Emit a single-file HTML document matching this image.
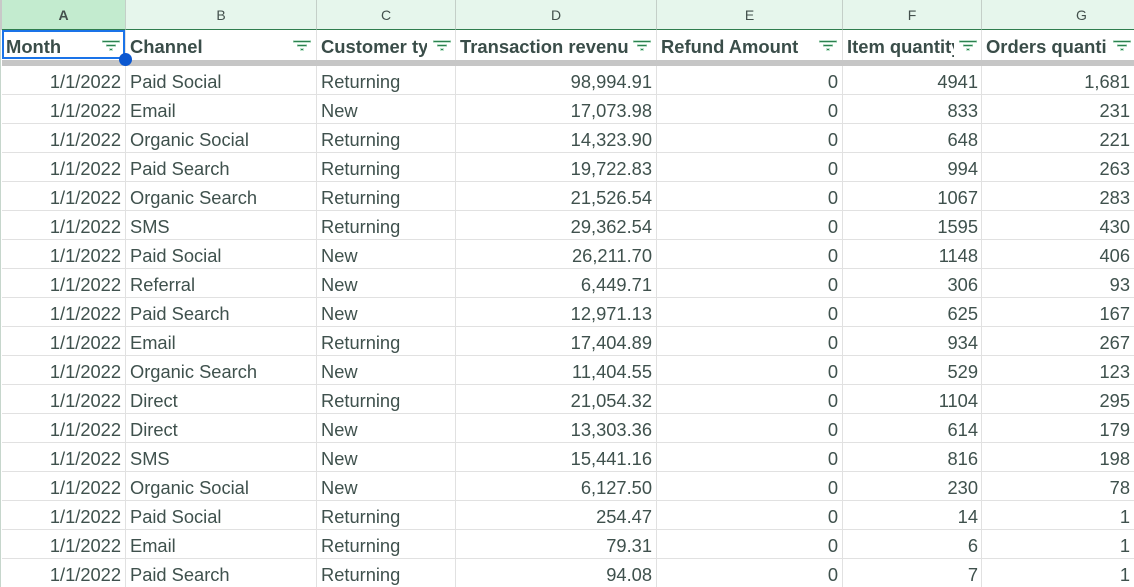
<!DOCTYPE html>
<html><head><meta charset="utf-8"><style>
html,body{margin:0;padding:0;width:1134px;height:587px;overflow:hidden;background:#fff}
body{font-family:"Liberation Sans",sans-serif;position:relative}
table{position:absolute;left:2px;top:0;border-collapse:separate;border-spacing:0;table-layout:fixed;width:1180px}
td,th{padding:0;overflow:hidden;white-space:nowrap;box-sizing:border-box}
tr.L th{height:30px;background:#e6f6ec;border-right:1px solid #c4cfc8;border-bottom:1px solid #2f7d4e;font-weight:400;font-size:14px;color:#43504c;text-align:center}
tr.L th.s{background:#c3ebcf;font-weight:700}
tr.H td{height:30px;border-right:1px solid #e1e1e1;font-weight:700;font-size:18.4px;line-height:20px;vertical-align:top;color:#3a4d49;padding:7px 0 0 4px;position:relative}
tr.H td span{display:block;overflow:hidden}
tr.H svg{position:absolute;top:10px;right:5px}
tr.B td{height:6px;background:#c6c6c6;border:0;font-size:0;padding:0}
tr.D td{height:29px;border-right:1px solid #e1e1e1;border-bottom:1px solid #e1e1e1;font-size:18.3px;line-height:20px;vertical-align:top;color:#3f514d;padding:6px 4px 0 4px;text-align:left}
tr.D td.r{text-align:right}
tr.D td:nth-child(6){padding-right:3px}
tr.D td.g{padding-right:51px}
.h{stroke:#bfe3cd;stroke-width:3;fill:none}
.c{stroke:#2c8050;stroke-width:1;fill:none}
#gut{position:absolute;left:0;top:0;width:1px;height:587px;background:#c6d6cc}
#gut2{position:absolute;left:0;top:0;width:2px;height:30px;background:#c8c8c8}
#sel{position:absolute;left:2px;top:30px;width:119px;height:25px;border:2px solid #1a73e8;pointer-events:none}
#dot{position:absolute;left:119px;top:53px;width:13px;height:13px;border-radius:50%;background:#0b57d0}
</style></head><body>
<table>
<colgroup><col style="width:124px"><col style="width:191px"><col style="width:139px"><col style="width:201px"><col style="width:186px"><col style="width:139px"><col style="width:200px"></colgroup>
<tr class="L"><th class="s">A</th><th>B</th><th>C</th><th>D</th><th>E</th><th>F</th><th>G</th></tr>
<tr class="H">
<td><span style="width:95px">Month</span><svg width="18" height="14" viewBox="0 0 18 14"><path class="h" d="M0 1.500H18M4 5.500H14M7 9.500H11"/><path class="c" d="M0.500 1.500H17.500M4.500 5.500H13.500M8 9.500H10"/></svg></td>
<td><span style="width:158px">Channel</span><svg width="18" height="14" viewBox="0 0 18 14"><path class="h" d="M0 1.500H18M4 5.500H14M7 9.500H11"/><path class="c" d="M0.500 1.500H17.500M4.500 5.500H13.500M8 9.500H10"/></svg></td>
<td><span style="width:106px">Customer type</span><svg style="right:4px" width="18" height="14" viewBox="0 0 18 14"><path class="h" d="M0 1.500H18M4 5.500H14M7 9.500H11"/><path class="c" d="M0.500 1.500H17.500M4.500 5.500H13.500M8 9.500H10"/></svg></td>
<td><span style="width:169px">Transaction revenue</span><svg width="18" height="14" viewBox="0 0 18 14"><path class="h" d="M0 1.500H18M4 5.500H14M7 9.500H11"/><path class="c" d="M0.500 1.500H17.500M4.500 5.500H13.500M8 9.500H10"/></svg></td>
<td><span style="width:158px">Refund Amount</span><svg width="18" height="14" viewBox="0 0 18 14"><path class="h" d="M0 1.500H18M4 5.500H14M7 9.500H11"/><path class="c" d="M0.500 1.500H17.500M4.500 5.500H13.500M8 9.500H10"/></svg></td>
<td><span style="width:107px">Item quantity</span><svg style="right:4px" width="18" height="14" viewBox="0 0 18 14"><path class="h" d="M0 1.500H18M4 5.500H14M7 9.500H11"/><path class="c" d="M0.500 1.500H17.500M4.500 5.500H13.500M8 9.500H10"/></svg></td>
<td><span style="width:120px">Orders quantity</span><svg style="right:50px" width="18" height="14" viewBox="0 0 18 14"><path class="h" d="M0 1.500H18M4 5.500H14M7 9.500H11"/><path class="c" d="M0.500 1.500H17.500M4.500 5.500H13.500M8 9.500H10"/></svg></td>
</tr>
<tr class="B"><td></td><td></td><td></td><td></td><td></td><td></td><td></td></tr>
<tr class="D"><td class="r">1/1/2022</td><td>Paid Social</td><td>Returning</td><td class="r">98,994.91</td><td class="r">0</td><td class="r">4941</td><td class="r g">1,681</td></tr>
<tr class="D"><td class="r">1/1/2022</td><td>Email</td><td>New</td><td class="r">17,073.98</td><td class="r">0</td><td class="r">833</td><td class="r g">231</td></tr>
<tr class="D"><td class="r">1/1/2022</td><td>Organic Social</td><td>Returning</td><td class="r">14,323.90</td><td class="r">0</td><td class="r">648</td><td class="r g">221</td></tr>
<tr class="D"><td class="r">1/1/2022</td><td>Paid Search</td><td>Returning</td><td class="r">19,722.83</td><td class="r">0</td><td class="r">994</td><td class="r g">263</td></tr>
<tr class="D"><td class="r">1/1/2022</td><td>Organic Search</td><td>Returning</td><td class="r">21,526.54</td><td class="r">0</td><td class="r">1067</td><td class="r g">283</td></tr>
<tr class="D"><td class="r">1/1/2022</td><td>SMS</td><td>Returning</td><td class="r">29,362.54</td><td class="r">0</td><td class="r">1595</td><td class="r g">430</td></tr>
<tr class="D"><td class="r">1/1/2022</td><td>Paid Social</td><td>New</td><td class="r">26,211.70</td><td class="r">0</td><td class="r">1148</td><td class="r g">406</td></tr>
<tr class="D"><td class="r">1/1/2022</td><td>Referral</td><td>New</td><td class="r">6,449.71</td><td class="r">0</td><td class="r">306</td><td class="r g">93</td></tr>
<tr class="D"><td class="r">1/1/2022</td><td>Paid Search</td><td>New</td><td class="r">12,971.13</td><td class="r">0</td><td class="r">625</td><td class="r g">167</td></tr>
<tr class="D"><td class="r">1/1/2022</td><td>Email</td><td>Returning</td><td class="r">17,404.89</td><td class="r">0</td><td class="r">934</td><td class="r g">267</td></tr>
<tr class="D"><td class="r">1/1/2022</td><td>Organic Search</td><td>New</td><td class="r">11,404.55</td><td class="r">0</td><td class="r">529</td><td class="r g">123</td></tr>
<tr class="D"><td class="r">1/1/2022</td><td>Direct</td><td>Returning</td><td class="r">21,054.32</td><td class="r">0</td><td class="r">1104</td><td class="r g">295</td></tr>
<tr class="D"><td class="r">1/1/2022</td><td>Direct</td><td>New</td><td class="r">13,303.36</td><td class="r">0</td><td class="r">614</td><td class="r g">179</td></tr>
<tr class="D"><td class="r">1/1/2022</td><td>SMS</td><td>New</td><td class="r">15,441.16</td><td class="r">0</td><td class="r">816</td><td class="r g">198</td></tr>
<tr class="D"><td class="r">1/1/2022</td><td>Organic Social</td><td>New</td><td class="r">6,127.50</td><td class="r">0</td><td class="r">230</td><td class="r g">78</td></tr>
<tr class="D"><td class="r">1/1/2022</td><td>Paid Social</td><td>Returning</td><td class="r">254.47</td><td class="r">0</td><td class="r">14</td><td class="r g">1</td></tr>
<tr class="D"><td class="r">1/1/2022</td><td>Email</td><td>Returning</td><td class="r">79.31</td><td class="r">0</td><td class="r">6</td><td class="r g">1</td></tr>
<tr class="D"><td class="r">1/1/2022</td><td>Paid Search</td><td>Returning</td><td class="r">94.08</td><td class="r">0</td><td class="r">7</td><td class="r g">1</td></tr>
</table>
<div id="gut"></div><div id="gut2"></div>
<div id="sel"></div><div id="dot"></div>
</body></html>
